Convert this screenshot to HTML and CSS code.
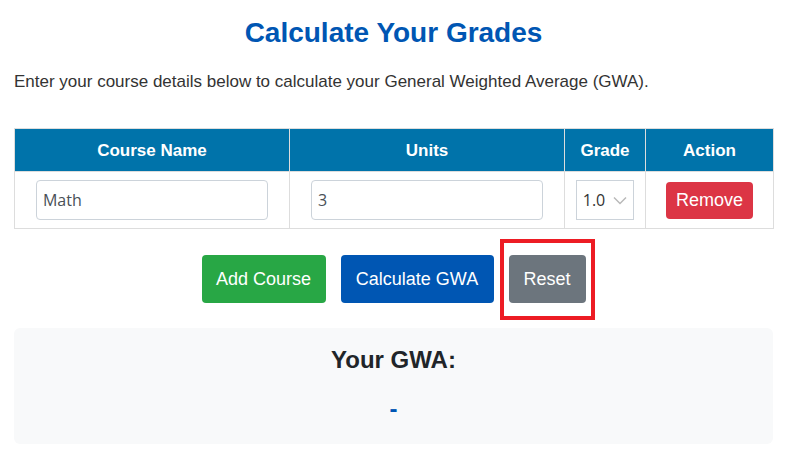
FILE: index.html
```html
<!DOCTYPE html>
<html lang="en">
<head>
<meta charset="utf-8">
<title>Calculate Your Grades</title>
<link rel="stylesheet" href="styles.css">
</head>
<body>
<main class="container">
  <h1 class="title">Calculate Your Grades</h1>
  <p class="intro">Enter your course details below to calculate your General Weighted Average (GWA).</p>
  <table class="courses">
    <colgroup>
      <col class="col-name">
      <col class="col-units">
      <col class="col-grade">
      <col class="col-action">
    </colgroup>
    <thead>
      <tr>
        <th>Course Name</th>
        <th>Units</th>
        <th>Grade</th>
        <th>Action</th>
      </tr>
    </thead>
    <tbody>
      <tr>
        <td><input class="field" type="text" value="Math"></td>
        <td><input class="field" type="text" value="3"></td>
        <td>
          <span class="select">
            <span class="select-value">1.0</span>
            <svg class="chevron" width="14" height="9" viewBox="0 0 14 9"><path d="M1 1.5 L7 7.5 L13 1.5" fill="none" stroke="#b9b9b9" stroke-width="1.5"/></svg>
          </span>
        </td>
        <td><button class="btn btn-danger">Remove</button></td>
      </tr>
    </tbody>
  </table>
  <div class="actions">
    <button class="btn btn-lg btn-success">Add Course</button>
    <button class="btn btn-lg btn-primary">Calculate GWA</button>
    <button class="btn btn-lg btn-secondary highlighted">Reset</button>
  </div>
  <section class="result">
    <h2 class="result-title">Your GWA:</h2>
    <div class="result-value">-</div>
  </section>
</main>
</body>
</html>
```
FILE: styles.css
```css
* { box-sizing: border-box; }
body {
  margin: 0;
  font-family: "Liberation Sans", Arial, sans-serif;
  color: #333;
  background: #fff;
}
.container {
  width: 759px;
  margin-left: 14px;
}
.title {
  margin: 17px 0 0;
  font-size: 28px;
  line-height: 32px;
  text-align: center;
  color: #0056b3;
  font-weight: bold;
}
.intro {
  margin: 23px 0 0;
  font-size: 17px;
  line-height: 20px;
  color: #333;
}
.courses {
  margin-top: 36px;
  width: 759px;
  border-collapse: collapse;
  table-layout: fixed;
}
.col-name, .col-units { width: 275px; }
.col-grade { width: 81px; }
.col-action { width: 128px; }
.courses th, .courses td {
  border: 1px solid #dddddd;
  text-align: center;
}
.courses th {
  background: #0073aa;
  color: #fff;
  font-size: 17px;
  font-weight: bold;
  line-height: 19px;
  padding: 12px 8px 11px;
}
.courses td {
  padding: 8px;
  height: 57px;
  vertical-align: middle;
}
.field {
  display: block;
  width: 90%;
  margin: 0 auto;
  height: 40px;
  padding: 0 6px;
  border: 1px solid #ccd3da;
  border-radius: 4px;
  font-family: "Open Sans", "Noto Sans", sans-serif;
  font-size: 16px;
  color: #495057;
  background: #fff;
}
.select {
  display: inline-flex;
  align-items: center;
  gap: 8px;
  height: 40px;
  padding: 0 6px;
  border: 1px solid #ccd3da;
  background: #fff;
  font-family: "Open Sans", "Noto Sans", sans-serif;
  font-size: 16px;
  color: #333;
}
.btn {
  border: none;
  border-radius: 4px;
  color: #fff;
  font-family: "Liberation Sans", Arial, sans-serif;
  white-space: nowrap;
  cursor: pointer;
}
.btn-danger {
  background: #dc3545;
  font-size: 18px;
  line-height: 21px;
  padding: 8px 10px;
  min-width: 87px;
}
.actions {
  display: flex;
  justify-content: center;
  gap: 15px;
  margin-top: 26px;
}
.btn-lg {
  font-size: 18px;
  line-height: 24px;
  padding: 12px 14px;
  height: 48px;
}
.btn-success { background: #28a745; min-width: 124px; }
.btn-primary { background: #0056b3; min-width: 153px; }
.btn-secondary { background: #6c757d; min-width: 77px; }
.highlighted { position: relative; }
.highlighted::after {
  content: "";
  position: absolute;
  top: -16px;
  left: -9px;
  right: -9px;
  bottom: -17px;
  border: 4px solid #ed1c24;
  pointer-events: none;
}
.result {
  margin-top: 25px;
  height: 116px;
  background: #f8f9fa;
  border-radius: 6px;
  text-align: center;
  padding-top: 18px;
}
.result-title {
  margin: 0;
  font-size: 24px;
  line-height: 28px;
  font-weight: bold;
  color: #212529;
}
.result-value {
  margin-top: 21px;
  font-size: 24px;
  line-height: 28px;
  font-weight: bold;
  color: #0056b3;
}
```
